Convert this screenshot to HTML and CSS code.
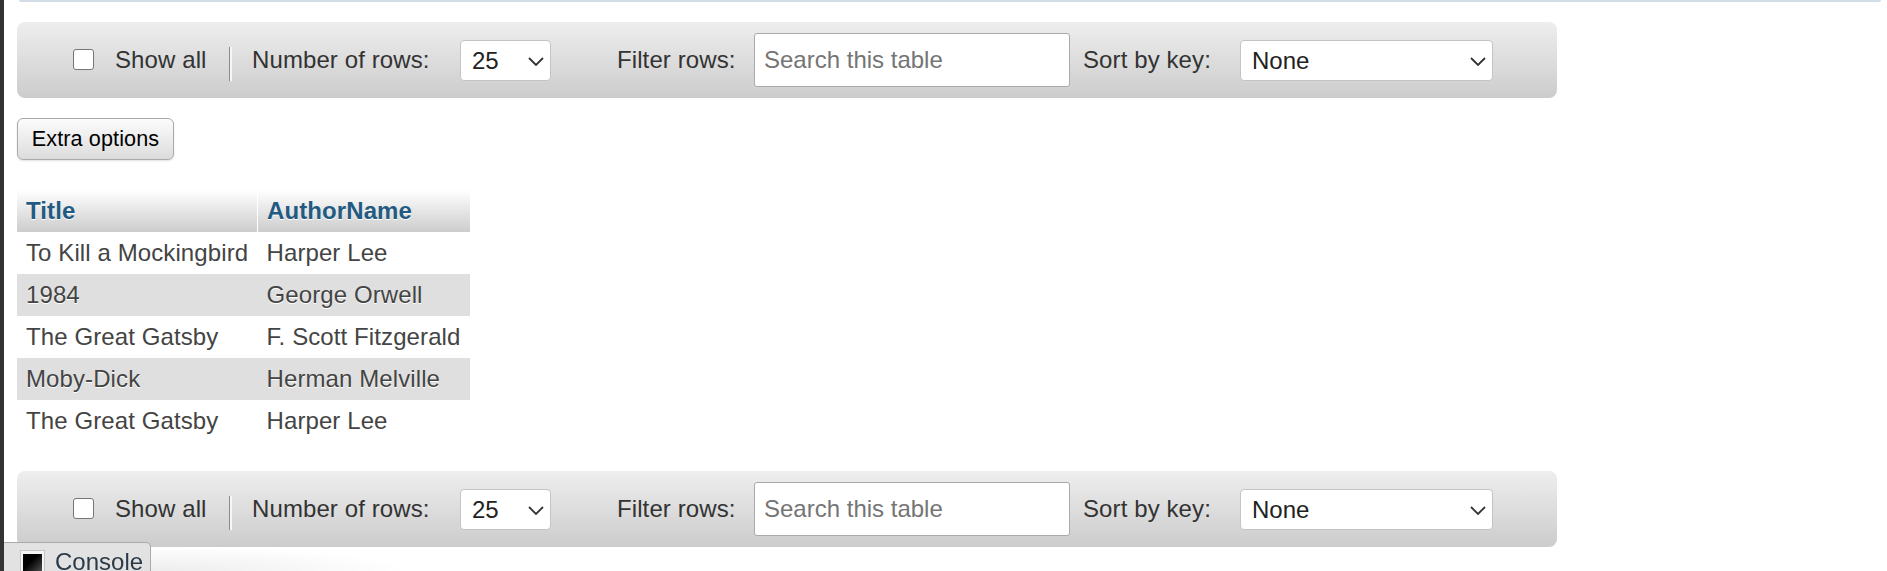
FILE: index.html
```html
<!DOCTYPE html>
<html lang="en">
<head>
<meta charset="utf-8">
<title>Browse table</title>
<link rel="stylesheet" href="styles.css">
</head>
<body>
<div class="page">
  <div class="edge"></div>
  <main class="content">
    <div class="topline"></div>

    <div class="navbar">
      <span class="nav-check"></span>
      <span class="nav-label nav-label--show">Show all</span>
      <span class="nav-sep"></span>
      <span class="nav-label nav-label--rows">Number of rows:</span>
      <span class="select select--rows">
        <select class="select-native"><option>25</option></select>
        <svg class="chevron" width="16" height="9" viewBox="0 0 16 9"><path d="M1 1 L8 8 L15 1" fill="none" stroke="#333" stroke-width="1.8"/></svg>
      </span>
      <span class="nav-label nav-label--filter">Filter rows:</span>
      <input class="search" type="text" placeholder="Search this table">
      <span class="nav-label nav-label--sort">Sort by key:</span>
      <span class="select select--sort">
        <select class="select-native"><option>None</option></select>
        <svg class="chevron" width="16" height="9" viewBox="0 0 16 9"><path d="M1 1 L8 8 L15 1" fill="none" stroke="#333" stroke-width="1.8"/></svg>
      </span>
    </div>

    <div class="actions">
      <button class="btn" type="button">Extra options</button>
    </div>

    <table class="data">
      <thead>
        <tr><th class="col-title">Title</th><th class="col-author">AuthorName</th></tr>
      </thead>
      <tbody>
        <tr class="odd"><td>To Kill a Mockingbird</td><td>Harper Lee</td></tr>
        <tr class="even"><td>1984</td><td>George Orwell</td></tr>
        <tr class="odd"><td>The Great Gatsby</td><td>F. Scott Fitzgerald</td></tr>
        <tr class="even"><td>Moby-Dick</td><td>Herman Melville</td></tr>
        <tr class="odd"><td>The Great Gatsby</td><td>Harper Lee</td></tr>
      </tbody>
    </table>

    <div class="navbar navbar--bottom">
      <span class="nav-check"></span>
      <span class="nav-label nav-label--show">Show all</span>
      <span class="nav-sep"></span>
      <span class="nav-label nav-label--rows">Number of rows:</span>
      <span class="select select--rows">
        <select class="select-native"><option>25</option></select>
        <svg class="chevron" width="16" height="9" viewBox="0 0 16 9"><path d="M1 1 L8 8 L15 1" fill="none" stroke="#333" stroke-width="1.8"/></svg>
      </span>
      <span class="nav-label nav-label--filter">Filter rows:</span>
      <input class="search" type="text" placeholder="Search this table">
      <span class="nav-label nav-label--sort">Sort by key:</span>
      <span class="select select--sort">
        <select class="select-native"><option>None</option></select>
        <svg class="chevron" width="16" height="9" viewBox="0 0 16 9"><path d="M1 1 L8 8 L15 1" fill="none" stroke="#333" stroke-width="1.8"/></svg>
      </span>
    </div>
  </main>
</div>

<div class="console-shade"></div>
<div class="console">
  <span class="console-icon"><span class="console-icon-inner"></span></span>
  <span class="console-label">Console</span>
</div>
</body>
</html>
```

FILE: styles.css
```css
html, body {
  margin: 0;
  padding: 0;
  height: 100%;
  overflow: hidden;
  background: #fff;
}

body {
  font-family: "Liberation Sans", Arial, sans-serif;
  font-size: 24px;
  color: #444;
}

.page {
  display: flex;
  min-height: 100vh;
}

.edge {
  width: 4px;
  flex: 0 0 4px;
  background: #333;
}

.content {
  flex: 1;
  padding-left: 13px;
}

.topline {
  height: 2px;
  margin: 0 6px 0 2px;
  background: #d3dde7;
  border-radius: 0 0 4px 4px;
}

/* navigation bar */
.navbar {
  box-sizing: border-box;
  width: 1540px;
  height: 76px;
  margin-top: 20px;
  padding-left: 56px;
  display: flex;
  align-items: center;
  border-radius: 8px;
  background: linear-gradient(#eee, #ccc);
}

.navbar--bottom {
  margin-top: 29px;
}

.nav-check {
  flex: none;
  box-sizing: border-box;
  width: 21px;
  height: 21px;
  border: 1.5px solid #767676;
  border-radius: 3px;
  background: #fff;
  margin-right: 21px;
  margin-top: -1px;
}

.nav-label {
  flex: none;
  color: #333;
  line-height: 28px;
  white-space: nowrap;
  letter-spacing: 0.1px;
}

.nav-label--show { width: 114px; }
.nav-label--rows { width: 208px; }
.nav-label--filter { width: 137px; }
.nav-label--sort { width: 157px; }

.nav-sep {
  flex: none;
  align-self: flex-start;
  margin-top: 25px;
  height: 34px;
  width: 2px;
  border-left: 1px solid #8c8c8c;
  background: #f6f6f6;
  margin-right: 20px;
}

.select {
  flex: none;
  position: relative;
  display: inline-flex;
}

.select--rows { width: 91px; margin-right: 66px; }
.select--sort { width: 253px; }

.select-native {
  -webkit-appearance: none;
  appearance: none;
  box-sizing: border-box;
  width: 100%;
  height: 41px;
  margin: 0;
  padding: 0 30px 0 11px;
  border: 1px solid #c4c4c4;
  border-radius: 4px;
  background: #fff;
  font-family: "Liberation Sans", Arial, sans-serif;
  font-size: 24px;
  color: #222;
  outline: none;
}

.chevron {
  position: absolute;
  right: 7px;
  top: 17px;
  pointer-events: none;
}

.search {
  flex: none;
  box-sizing: border-box;
  width: 316px;
  height: 54px;
  margin: 0 13px 0 0;
  padding: 0 9px;
  border: 1px solid #aaa;
  border-radius: 3px;
  background: #fff;
  font-family: "Liberation Sans", Arial, sans-serif;
  font-size: 24px;
  color: #222;
  outline: none;
}

.search::placeholder {
  color: #757575;
}

/* extra options */
.actions {
  margin-top: 20px;
  height: 42px;
}

.btn {
  box-sizing: border-box;
  height: 42px;
  width: 157px;
  padding: 0;
  border: 1px solid #aaa;
  border-radius: 6px;
  background: linear-gradient(#fcfcfc, #dcdcdc);
  box-shadow: 0 1px 2px rgba(0, 0, 0, 0.12);
  font-family: "Liberation Sans", Arial, sans-serif;
  font-size: 21.6px;
  color: #000;
  text-align: center;
  white-space: nowrap;
  letter-spacing: 0.1px;
}

/* table */
.data {
  margin-top: 30px;
  border-collapse: collapse;
  border-spacing: 0;
}

.data th,
.data td {
  padding: 7px 9px;
  line-height: 28px;
  text-align: left;
  white-space: nowrap;
  text-shadow: 0 1px 0 #fff;
  letter-spacing: 0.1px;
}

.data th {
  background: linear-gradient(#fff, #ccc);
  color: #235a81;
  font-weight: bold;
}

.data th.col-title {
  width: 222px;
  border-right: 1px solid #fff;
}

.data th.col-author {
  width: 194px;
}

.data td {
  color: #444;
}

.data tr.odd td { background: #fff; }
.data tr.even td { background: #dfdfdf; }

/* console */
.console {
  position: fixed;
  left: 4px;
  bottom: -4px;
  box-sizing: border-box;
  width: 147px;
  height: 33px;
  padding: 5px 0 0 16px;
  display: flex;
  align-items: flex-start;
  gap: 10px;
  background: #e2e2e2;
  border: 1px solid #aaa;
  border-left: none;
  border-radius: 0 5px 0 0;
}

.console-icon {
  box-sizing: border-box;
  width: 25px;
  height: 25px;
  margin-top: 2px;
  padding: 3px 2px 0 2px;
  border: 1px solid #c4c4c4;
  background: #f4f4f4;
}

.console-icon-inner {
  display: block;
  width: 19px;
  height: 19px;
  background: linear-gradient(135deg, #000 40%, #555);
}

.console-label {
  line-height: 28px;
  color: #2b3a48;
}

.console-shade {
  position: fixed;
  left: 151px;
  bottom: 0;
  width: 260px;
  height: 25px;
  background: radial-gradient(ellipse at 0% 100%, rgba(0, 0, 0, 0.07), rgba(0, 0, 0, 0) 70%);
}
```
